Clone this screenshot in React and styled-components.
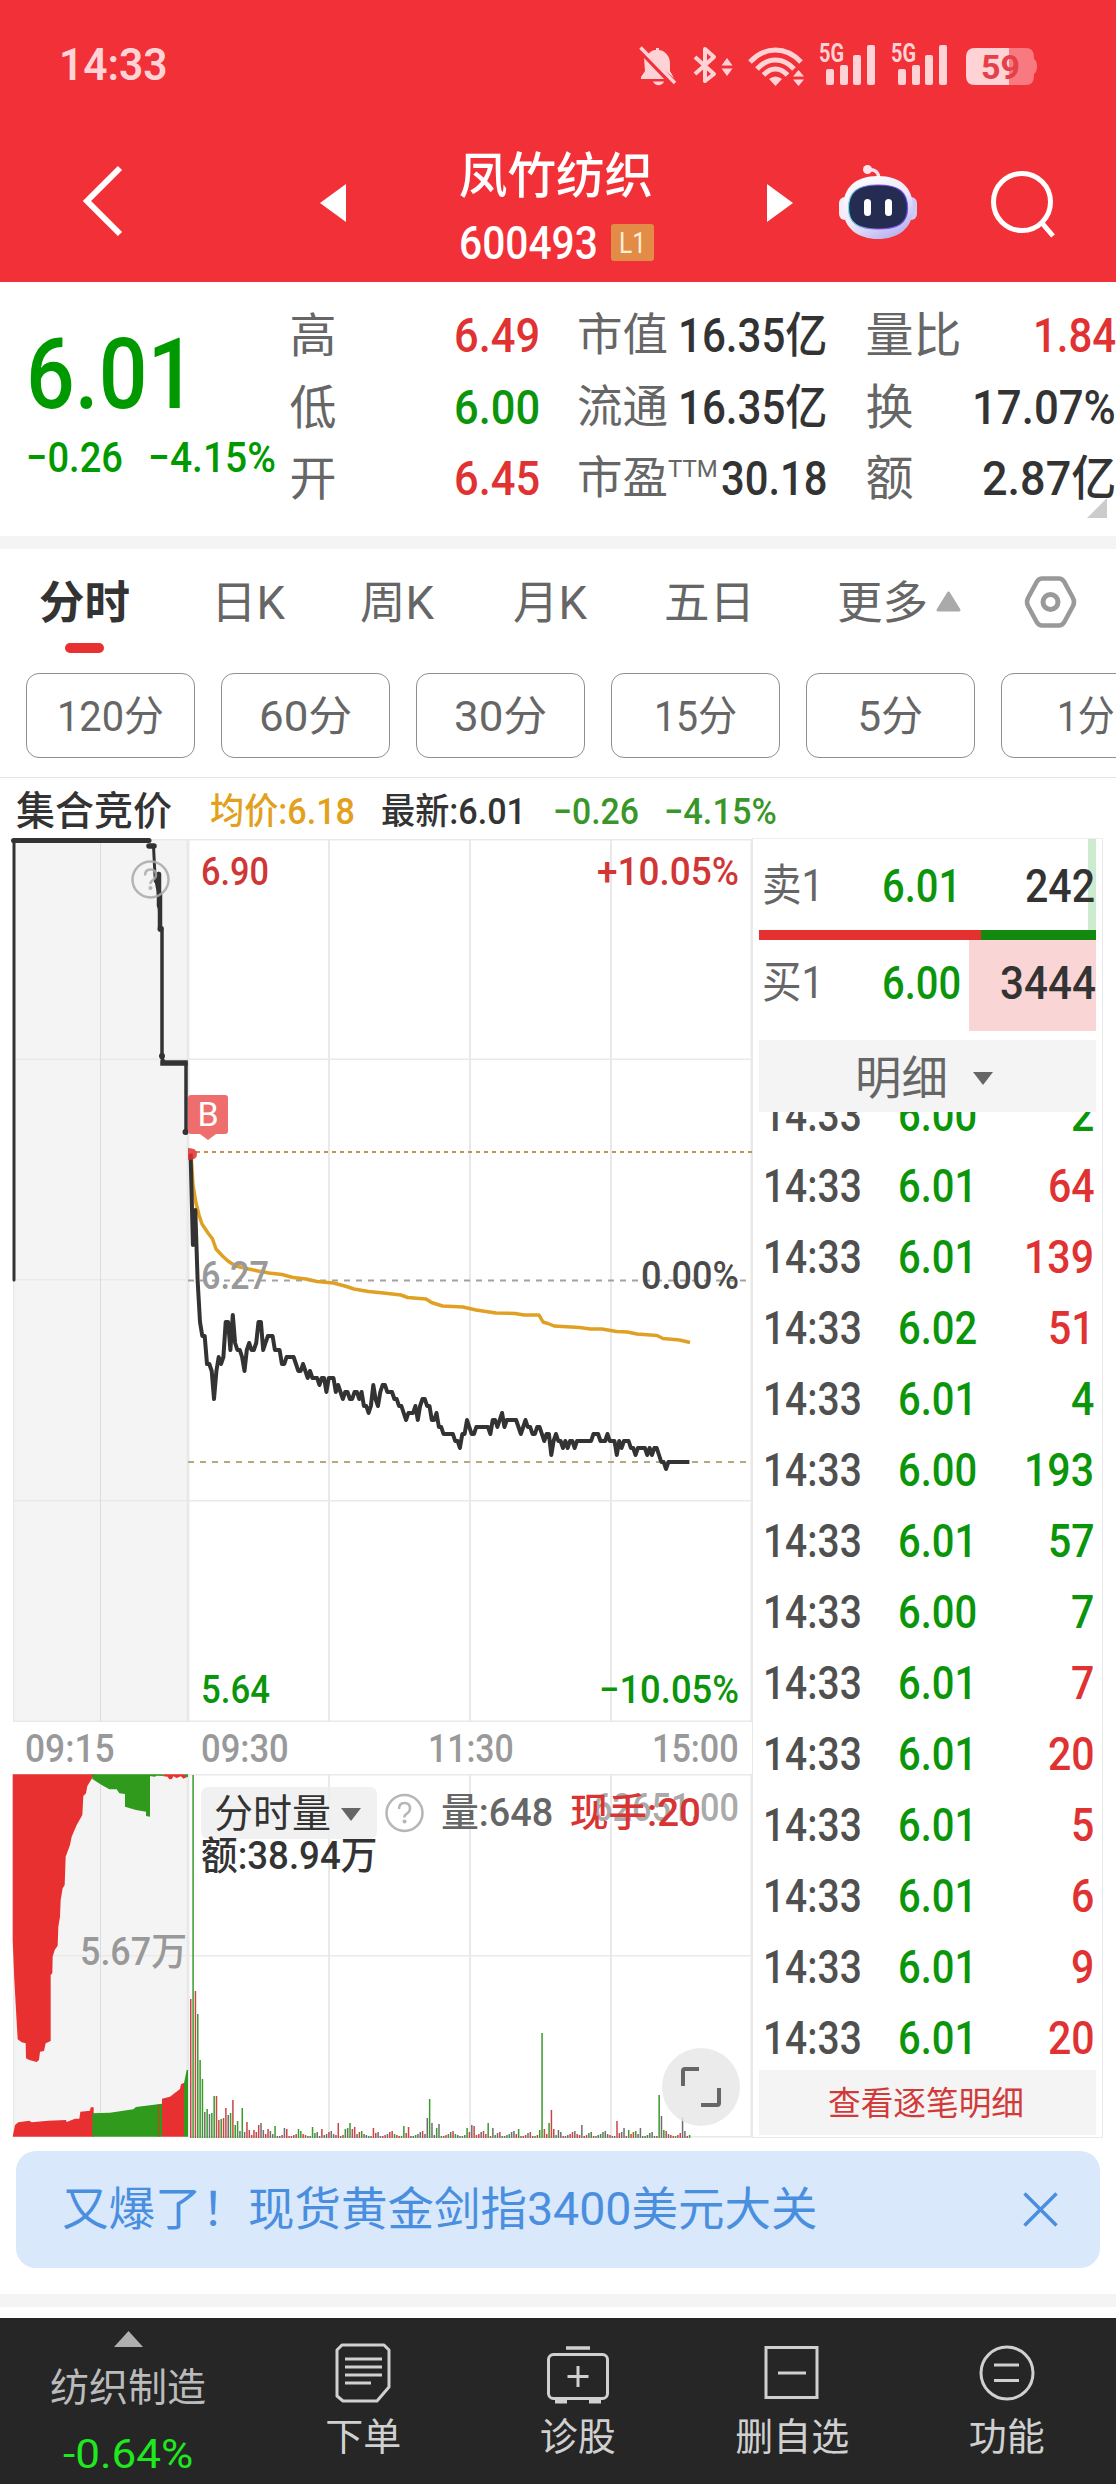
import React, { useLayoutEffect, useRef, useState } from "react";
import styled, { createGlobalStyle } from "styled-components";

const GlobalStyle = createGlobalStyle`
  * {
    box-sizing: border-box;
  }
  body {
    margin: 0;
    background: #fff;
    font-family: Roboto, "Noto Sans CJK SC", sans-serif;
    color: #333;
  }
  svg {
    display: block;
    flex: none;
    overflow: visible;
  }
`;

const RED = "#e03232";
const GREEN = "#0b950b";

const Page = styled.div`
  width: 1116px;
  height: 2484px;
  overflow: hidden;
  background: #fff;
  display: flex;
  flex-direction: column;
`;

/* text squeezed to a given width, the digits of the app font are narrow */
const FitBox = styled.span`
  display: inline-block;
  flex: none;
  white-space: nowrap;
  width: ${(p) => p.$w}px;
  font-size: ${(p) => p.$size}px;
  font-weight: ${(p) => p.$weight};
  color: ${(p) => p.$color || "inherit"};
  margin-left: ${(p) => p.$left || 0}px;
`;
const FitInner = styled.span`
  display: inline-block;
  transform-origin: left center;
`;

const Fit = ({ w, size, weight = 500, color, left, children }) => {
  const ref = useRef(null);
  const [k, setK] = useState(1);
  useLayoutEffect(() => {
    setK(w / ref.current.offsetWidth);
  }, [w, size, weight]);
  return (
    <FitBox $w={w} $size={size} $weight={weight} $color={color} $left={left}>
      <FitInner ref={ref} style={{ transform: `scaleX(${k})` }}>
        {children}
      </FitInner>
    </FitBox>
  );
};

/* ---------- header ---------- */

const Header = styled.header`
  height: 282px;
  flex: none;
  background: #f23037;
  color: #fff;
`;
const StatusBar = styled.div`
  height: 130px;
  padding: 0 80px 0 59px;
  display: flex;
  align-items: center;
  justify-content: space-between;
  color: #ffd3d6;
`;
const TitleBar = styled.div`
  height: 152px;
  display: flex;
  align-items: center;
  padding-left: 79px;
`;
const StockTitle = styled.div`
  width: 196px;
  margin: 0 112px 0 113px;
  padding-top: 2px;
  display: flex;
  flex-direction: column;
`;
const StockName = styled.div`
  font-size: 48.500px;
  line-height: 68px;
  font-weight: 500;
  white-space: nowrap;
  margin-top: 3px;
`;
const StockCode = styled.div`
  display: flex;
  align-items: center;
  height: 64px;
`;
const LevelBadge = styled.span`
  width: 43px;
  height: 37px;
  margin-left: 13px;
  border-radius: 3px;
  background: #e38c47;
  color: #fff0d8;
  display: flex;
  align-items: center;
  justify-content: center;
`;

const SignalGroup = ({ x }) => (
  <g transform={`translate(${x} 0)`}>
    <text x="0" y="19" fontSize="25" fontWeight="700" textLength="25" lengthAdjust="spacingAndGlyphs">
      5G
    </text>
    <rect x="7" y="26" width="8" height="16" rx="2" />
    <rect x="21" y="22" width="8" height="20" rx="2" />
    <rect x="34" y="12" width="8" height="30" rx="2" />
    <rect x="48" y="2" width="8" height="40" rx="2" />
  </g>
);

const StatusIcons = () => (
  <svg width="398" height="44" viewBox="0 0 398 44" fill="#ffd3d6">
    {/* muted bell */}
    <path d="M9 13 C12 8 15 7 18 7 V5 h3 v2 C28 8 32 14 32 20 V28 L36 35 Z" />
    <path d="M6 15 L26 36 H3 V34 L7 28 Z" />
    <path d="M15 38.500 h11 c-2 5 -9 5 -11 0z" />
    <path d="M2.500 4.500 L37 40" stroke="#ffd3d6" strokeWidth="3.500" />
    {/* bluetooth */}
    <g fill="none" stroke="#ffd3d6" strokeWidth="4">
      <path d="M57 14 L76 31 L67 38 V6 L76 14 L57 31" strokeLinejoin="round" />
    </g>
    <path d="M89 15 l5.500 7.500 h-11z M89 33 l5.500 -7.500 h-11z" />
    {/* wifi */}
    <g fill="none" stroke="#ffd3d6" strokeWidth="5">
      <path d="M112 19 C127 3 148 3 163 19" />
      <path d="M119 26 C130 14 145 14 156 26" />
      <path d="M125.500 32 C133 24 142 24 149.500 32" />
    </g>
    <path d="M131 36 q6.500 -5 13 0 l-6.500 7z" />
    <path d="M160.500 27 l5.500 6.500 h-11z M160.500 43 l5.500 -6.500 h-11z" />
    <SignalGroup x={181} />
    <SignalGroup x={253} />
    {/* battery */}
    <path d="M337 5 H371 V42 H337 Q328 42 328 33 V14 Q328 5 337 5z" />
    <path
      d="M371 5 H388 Q396 5 396 14 V16 Q399 18 399 23 Q399 29 396 31 V33 Q396 42 388 42 H371z"
      opacity="0.450"
    />
    <text x="343" y="36" fontSize="34" fontWeight="700" fill="#e5404a">
      59
    </text>
  </svg>
);

const Robot = () => (
  <svg width="78" height="76" viewBox="0 0 78 76">
    <defs>
      <linearGradient id="shell" x1="0" y1="0" x2="0.600" y2="1">
        <stop offset="0" stopColor="#fff" />
        <stop offset="0.600" stopColor="#eeeafb" />
        <stop offset="1" stopColor="#bcb8ee" />
      </linearGradient>
      <linearGradient id="rim" x1="0" y1="0" x2="1" y2="0">
        <stop offset="0" stopColor="#6fd9ea" />
        <stop offset="0.500" stopColor="#8a4ae8" />
        <stop offset="1" stopColor="#6a4af0" />
      </linearGradient>
    </defs>
    <path d="M28 6 Q40 4 40 16" fill="none" stroke="#fbe3ee" strokeWidth="3.500" />
    <circle cx="28.500" cy="5.500" r="4.500" fill="#fbe3ee" />
    <rect x="0" y="33" width="14" height="23" rx="6" fill="#f5ecf8" />
    <rect x="64" y="33" width="14" height="23" rx="6" fill="#cfc9f4" />
    <path
      d="M39 12 C62 12 74 24 74 44 C74 65 58 75 39 75 C20 75 4 65 4 44 C4 24 16 12 39 12z"
      fill="url(#shell)"
    />
    <path
      d="M39 21 C60 21 68.500 28 68.500 44 C68.500 60 58 65 39 65 C20 65 9.500 60 9.500 44 C9.500 28 18 21 39 21z"
      fill="#252c52"
      stroke="url(#rim)"
      strokeWidth="1.200"
    />
    <rect x="25" y="35" width="7" height="17" rx="3.500" fill="#fff" />
    <rect x="46" y="35" width="7" height="17" rx="3.500" fill="#fff" />
  </svg>
);

const RobotSlot = styled.div`
  margin: -8px 74px 0 46px;
`;
const BackSlot = styled.div`
  margin: -10px 195px 0 0;
`;
const ArrowSlot = styled.div`
  margin-top: -6px;
`;

const TopHeader = () => (
  <Header>
    <StatusBar>
      <Fit w={109} size={44} weight={600}>
        14:33
      </Fit>
      <StatusIcons />
    </StatusBar>
    <TitleBar>
      <BackSlot>
        <svg width="46" height="76" viewBox="0 0 46 76">
          <path d="M41 5 L8 38 L41 71" fill="none" stroke="#fff" strokeWidth="6" />
        </svg>
      </BackSlot>
      <ArrowSlot>
        <svg width="26" height="38" viewBox="0 0 26 38">
          <path d="M0 19 L26 0 V38z" fill="#fff" />
        </svg>
      </ArrowSlot>
      <StockTitle>
        <StockName>凤竹纺织</StockName>
        <StockCode>
          <Fit w={139} size={46}>
            600493
          </Fit>
          <LevelBadge>
            <Fit w={27} size={30} weight={400}>
              L1
            </Fit>
          </LevelBadge>
        </StockCode>
      </StockTitle>
      <ArrowSlot>
        <svg width="26" height="38" viewBox="0 0 26 38">
          <path d="M26 19 L0 0 V38z" fill="#fff" />
        </svg>
      </ArrowSlot>
      <RobotSlot>
        <Robot />
      </RobotSlot>
      <ArrowSlot>
        <svg width="68" height="68" viewBox="0 0 68 68" fill="none" stroke="#fff" strokeWidth="5">
          <circle cx="31" cy="33" r="28.500" />
          <path d="M51 54 L62 67" />
        </svg>
      </ArrowSlot>
    </TitleBar>
  </Header>
);

/* ---------- quote ---------- */

const QuotePanel = styled.section`
  height: 254px;
  flex: none;
  display: flex;
  position: relative;
`;
const PriceBlock = styled.div`
  width: 289.500px;
  flex: none;
  padding: 42px 0 0 26px;
  color: #009a00;
`;
const BigPrice = styled.div`
  height: 101px;
  line-height: 101px;
`;
const ChangeLine = styled.div`
  display: flex;
  height: 66px;
  line-height: 66px;
`;
const MetricColumn = styled.div`
  width: 250px;
  margin-right: ${(p) => p.$gap}px;
  padding-top: 18px;
  flex: none;
`;
const Metric = styled.div`
  height: 71.500px;
  display: flex;
  align-items: center;
  justify-content: space-between;
  line-height: 71px;
`;
const MetricLabel = styled.span`
  font-size: ${(p) => p.$size}px;
  color: #666;
  white-space: nowrap;
`;
const Ttm = styled.sup`
  font-size: 24px;
  line-height: 1;
  vertical-align: 17px;
`;
const Corner = styled.i`
  position: absolute;
  right: 9px;
  bottom: 18px;
  border-left: 20px solid transparent;
  border-bottom: 20px solid #ccc;
`;

const metricColumns = [
  {
    gap: 37.5,
    size: 47,
    rows: [
      ["高", "6.49", 86, RED],
      ["低", "6.00", 86, GREEN],
      ["开", "6.45", 86, RED],
    ],
  },
  {
    gap: 38.5,
    size: 45.5,
    rows: [
      ["市值", "16.35亿", 149, "#333"],
      ["流通", "16.35亿", 149, "#333"],
      ["市盈", "30.18", 106, "#333"],
    ],
  },
  {
    gap: 0,
    size: 48,
    rows: [
      ["量比", "1.84", 83, RED],
      ["换", "17.07%", 144, "#333"],
      ["额", "2.87亿", 134, "#333"],
    ],
  },
];

const Quote = () => (
  <QuotePanel>
    <PriceBlock>
      <BigPrice>
        <Fit w={170} size={99}>
          6.01
        </Fit>
      </BigPrice>
      <ChangeLine>
        <Fit w={97} size={42}>
          −0.26
        </Fit>
        <Fit w={128} size={42} left={25}>
          −4.15%
        </Fit>
      </ChangeLine>
    </PriceBlock>
    {metricColumns.map((col, i) => (
      <MetricColumn key={i} $gap={col.gap}>
        {col.rows.map(([label, value, w, color]) => (
          <Metric key={label}>
            <MetricLabel $size={col.size}>
              {label}
              {label === "市盈" && <Ttm>TTM</Ttm>}
            </MetricLabel>
            <Fit w={w} size={48} color={color}>
              {value}
            </Fit>
          </Metric>
        ))}
      </MetricColumn>
    ))}
    <Corner />
  </QuotePanel>
);

const Stripe = styled.div`
  height: 13px;
  flex: none;
  background: #f4f4f4;
`;

/* ---------- tabs ---------- */

const Tabs = styled.nav`
  height: 124px;
  flex: none;
  padding-left: 39px;
  display: flex;
  align-items: flex-start;
`;
const Tab = styled.div`
  width: ${(p) => p.$w}px;
  flex: none;
  font-size: 45.500px;
  line-height: 109px;
  white-space: nowrap;
  color: ${(p) => (p.$active ? "#333" : "#666")};
  font-weight: ${(p) => (p.$active ? 700 : 400)};
  position: relative;
  ${(p) =>
    p.$active &&
    `&::after {
      content: "";
      position: absolute;
      left: 26px;
      top: 94px;
      width: 39px;
      height: 10px;
      border-radius: 5px;
      background: #e83030;
    }`}
`;
const TabIcon = styled.div`
  margin: ${(p) => p.$m};
`;
const Pills = styled.div`
  height: 105px;
  flex: none;
  padding-left: 26px;
  display: flex;
  gap: 26px;
  border-bottom: 1px solid #e4e4e4;
`;
const Pill = styled.div`
  width: 169px;
  height: 85px;
  flex: none;
  border: 1px solid #8f8f8f;
  border-radius: 13px;
  padding-top: 3px;
  display: flex;
  align-items: center;
  justify-content: center;
  color: #666;
  line-height: 80px;
`;

const TabArea = () => (
  <>
    <Tabs>
      <Tab $active $w={172}>
        分时
      </Tab>
      <Tab $w={149}>日K</Tab>
      <Tab $w={153}>周K</Tab>
      <Tab $w={151}>月K</Tab>
      <Tab $w={173}>五日</Tab>
      <Tab $w={98}>更多</Tab>
      <TabIcon $m="42px 63px 0 1px">
        <svg width="25" height="21" viewBox="0 0 25 21">
          <path d="M12.500 2 L23 19 H2z" fill="#aaa" stroke="#aaa" strokeWidth="3" strokeLinejoin="round" />
        </svg>
      </TabIcon>
      <TabIcon $m="26px 0 0 0">
        <svg width="53" height="54" viewBox="0 0 53 54" fill="none" stroke="#999" strokeWidth="5">
          <path
            d="M18 3.500 H35 Q38 3.500 40 6.500 L49 23 Q51 27 49 31 L40 47.500 Q38 50.500 35 50.500 H18 Q15 50.500 13 47.500 L4 31 Q2 27 4 23 L13 6.500 Q15 3.500 18 3.500z"
            strokeWidth="4.500"
          />
          <circle cx="26.500" cy="27" r="7.500" />
        </svg>
      </TabIcon>
    </Tabs>
    <Pills>
      {[
        ["120分", 107],
        ["60分", 93],
        ["30分", 93],
        ["15分", 83],
        ["5分", 66],
        ["1分", 58],
      ].map(([label, w]) => (
        <Pill key={label}>
          <Fit w={w} size={42} weight={400}>
            {label}
          </Fit>
        </Pill>
      ))}
    </Pills>
  </>
);

/* ---------- chart legend ---------- */

const Legend = styled.div`
  height: 60px;
  flex: none;
  padding-left: 16px;
  display: flex;
  line-height: 68px;
`;

const ChartLegend = () => (
  <Legend>
    <Fit w={156} size={39.5}>
      集合竞价
    </Fit>
    <Fit w={145} size={36.5} color="#e2a01c" left={38}>
      均价:6.18
    </Fit>
    <Fit w={145} size={36.5} left={26}>
      最新:6.01
    </Fit>
    <Fit w={86} size={36.5} color="#3a9628" left={27}>
      −0.26
    </Fit>
    <Fit w={113} size={36.5} color="#3a9628" left={25}>
      −4.15%
    </Fit>
  </Legend>
);

/* ---------- charts ---------- */

// price of every minute, in cents
const prices = [
  645, 632, 637, 627, 621, 619, 619, 615, 615, 614, 610, 614, 616, 615, 616, 621, 621, 617, 622, 618,
  617, 617, 616, 614, 617, 618, 617, 617, 618, 621, 621, 617, 618, 619, 619, 619, 617, 617, 617, 615,
  615, 616, 616, 616, 616, 615, 614, 614, 615, 614, 613, 614, 613, 613, 613, 612, 613, 613, 611, 613,
  613, 613, 611, 612, 611, 610, 611, 611, 610, 610, 611, 611, 610, 611, 609, 609, 608, 609, 612, 610,
  609, 611, 612, 612, 611, 611, 611, 610, 610, 609, 609, 608, 607, 608, 608, 608, 609, 607, 609, 610,
  610, 609, 609, 607, 607, 608, 606, 606, 605, 605, 605, 605, 605, 604, 604, 603, 605, 605, 607, 606,
  605, 605, 606, 606, 606, 606, 606, 606, 605, 607, 607, 606, 607, 608, 606, 607, 607, 607, 607, 607,
  606, 605, 606, 607, 606, 606, 605, 605, 606, 606, 605, 604, 605, 605, 602, 604, 605, 604, 604, 603,
  604, 603, 604, 604, 603, 604, 604, 604, 604, 604, 604, 604, 605, 605, 605, 604, 604, 604, 605, 604,
  604, 604, 602, 604, 603, 604, 604, 604, 603, 603, 602, 603, 603, 603, 603, 602, 603, 602, 603, 603,
  602, 601, 601, 600, 601, 601, 601, 601, 601, 601, 601, 601, 601, 601,
];
const minuteX = (m) => 190.6 + m * 2.342;
const priceY = (c) => 442 + (627 - c) * 7;
const pricePoints = prices.map((c, m) => `${minuteX(m).toFixed(1)},${priceY(c)}`).join(" ");

const averagePoints =
  "191,315 193,347 196,365 199,377 202,386 208,395 212.5,401 216,411 222.5,418 228,423 235.5,428 248.5,431 258,433 269,435 282,436.5 293,439.5 306,441 317,443.5 333.5,445 346.5,448.5 354,451 368.5,453.5 383.5,455 401,457 407.5,459.5 426,461 431.5,464.5 442.5,468 463,469 476,472 496,475 515,475.5 524,477 539,477 543,484 548,485.5 554,488 579.5,489.5 590.5,491 602,491 616.5,493.5 627.5,494 637,496 657,497.5 663,500.5 679.5,502 690,504.5";

const ChartText = ({ x, y, w, end, color, size = 38.5, children }) => (
  <text
    x={x}
    y={y}
    fill={color}
    fontSize={size}
    fontWeight="500"
    textAnchor={end ? "end" : "start"}
    textLength={w}
    lengthAdjust="spacingAndGlyphs"
  >
    {children}
  </text>
);

const HelpIcon = ({ cx, cy }) => (
  <g opacity="0.850">
    <circle cx={cx} cy={cy} r="18" fill="none" stroke="#aaa" strokeWidth="2.500" />
    <path
      d={`M${cx - 5.5} ${cy - 4} q0 -6 5.500 -6 t5.500 5.500 q0 3 -3 5 t-2.500 4`}
      fill="none"
      stroke="#aaa"
      strokeWidth="2.500"
    />
    <circle cx={cx} cy={cy + 8.5} r="2" fill="#aaa" />
  </g>
);

const PriceChart = () => (
  <svg width="752" height="885" viewBox="0 0 752 885">
    <rect x="13" y="1" width="174" height="883" fill="#f4f4f4" />
    <g fill="#e9e9e9">
      <rect x="13" y="1" width="739" height="1.500" />
      <rect x="13" y="220.500" width="739" height="1.500" />
      <rect x="13" y="441" width="176" height="1.500" />
      <rect x="13" y="662" width="739" height="1.500" />
      <rect x="13" y="882.500" width="739" height="1.500" />
      <rect x="13" y="1" width="1.500" height="883" />
      <rect x="100" y="1" width="1" height="883" fill="#dcdcdc" />
      <rect x="186.500" y="1" width="3" height="883" />
      <rect x="328" y="1" width="2" height="883" />
      <rect x="469" y="1" width="2" height="883" />
      <rect x="610" y="1" width="2" height="883" />
      <rect x="750.500" y="1" width="1.500" height="883" />
    </g>
    <line x1="196" x2="752" y1="314" y2="314" stroke="#c39358" strokeWidth="2" strokeDasharray="4 4" />
    <line x1="188" x2="752" y1="442.500" y2="442.500" stroke="#a2a2a2" strokeWidth="2" strokeDasharray="6 6" />
    <line x1="188" x2="752" y1="624" y2="624" stroke="#b9a87f" strokeWidth="2" strokeDasharray="6 6" />

    {/* call auction */}
    <g fill="none" stroke="#333" strokeLinecap="round" strokeLinejoin="round">
      <path d="M14 442 V4" strokeWidth="3" />
      <path d="M13.500 2.500 H149" strokeWidth="5" />
      <path d="M149 8 H154" strokeWidth="5.500" />
      <path d="M153.500 8 L155 38 L158 53 L160.500 88" strokeWidth="3" />
      <path d="M158.500 36 L156 43 M159 36 V68 M160 56 V90" strokeWidth="4.500" />
      <path d="M162 90 V220 L164 225" strokeWidth="3.500" />
      <path d="M163 225 H185" strokeWidth="5.500" strokeLinecap="square" />
      <path d="M186 225 V295" strokeWidth="3.500" />
    </g>
    <circle cx="160.500" cy="91" r="3" fill="#333" />
    <circle cx="162" cy="218" r="3" fill="#333" />
    <circle cx="185.500" cy="294" r="3" fill="#333" />
    <HelpIcon cx={150.5} cy={41.5} />

    <polyline points={averagePoints} fill="none" stroke="#dfa024" strokeWidth="3.500" strokeLinejoin="round" />
    <polyline points={pricePoints} fill="none" stroke="#333" strokeWidth="4" strokeLinejoin="round" />
    <path d="M188 310 q9 0 9 6 q0 6 -9 6z" fill="#e02f2f" opacity="0.850" />

    <path d="M191 257 H225 Q228 257 228 260 V293 Q228 296 225 296 H216 L208 302 L200 296 H191 Q188 296 188 293 V260 Q188 257 191 257z" fill="#ee6e6e" />
    <text x="208" y="287.500" fontSize="34" fill="#fff" textAnchor="middle">
      B
    </text>

    <ChartText x={201} y={46.5} w={68} color="#d03636">
      6.90
    </ChartText>
    <ChartText x={739} y={46.5} w={142} end color="#d03636">
      +10.05%
    </ChartText>
    <ChartText x={201} y={451} w={68} color="#999">
      6.27
    </ChartText>
    <ChartText x={739} y={451} w={98} end color="#4a4a4a">
      0.00%
    </ChartText>
    <ChartText x={201} y={865} w={69} color={GREEN}>
      5.64
    </ChartText>
    <ChartText x={739} y={865} w={140} end color={GREEN}>
      −10.05%
    </ChartText>
  </svg>
);

const TimeAxis = styled.div`
  height: 51px;
  display: flex;
  padding-left: 25px;
  line-height: 52px;
`;

// [minute, height, colour] of the bars that stand out, the rest is small
const R = "#c84646";
const G = "#3a9a2c";
const K = "#6e6e6e";
const tallBars = [
  [0, 139, R], [1, 363, G], [2, 147, R], [3, 124, G], [4, 78, G], [5, 59, G], [6, 26, K], [7, 29, G],
  [8, 24, K], [9, 25, G], [10, 42, G], [11, 42, R], [12, 18, R], [13, 19, G], [14, 20, R], [15, 30, R],
  [16, 23, K], [17, 25, G], [18, 38, R], [19, 13, G], [20, 17, G], [21, 7, K], [22, 30, G], [23, 6, K],
  [24, 16, R], [25, 8, R], [27, 8, R], [29, 13, R], [30, 15, K], [31, 8, K], [33, 9, R], [36, 12, G],
  [40, 10, K], [41, 9, R], [46, 9, G], [52, 11, G], [56, 9, R], [63, 15, R], [66, 9, G], [67, 10, K],
  [68, 15, G], [69, 9, R], [70, 11, R], [78, 10, R], [91, 12, G], [93, 11, R], [101, 20, K],
  [102, 39, G], [103, 15, K], [105, 10, G], [106, 14, K], [118, 10, G], [120, 13, K], [121, 12, R],
  [127, 15, G], [129, 10, K], [140, 9, G], [149, 8, G], [150, 105, G], [151, 9, R], [153, 15, G],
  [154, 28, R], [155, 9, R], [157, 8, K], [167, 13, K], [182, 17, R], [185, 10, K], [187, 8, G],
  [192, 10, K], [200, 43, G], [201, 22, K], [202, 8, G], [210, 21, K], [211, 7, K],
];
const smallBars = [3, 6, 2, 4, 7, 3, 2, 5, 2, 3, 6, 4, 2];
const tallByMinute = Object.fromEntries(tallBars.map((b) => [b[0], b]));
const volumeBars = prices.map(
  (_, m) => tallByMinute[m] || [m, smallBars[(m * 7) % 13], [K, R, G, K, R][(m * 3 + (m >> 2)) % 5]]
);

const VolumeBox = styled.div`
  position: relative;
  height: 364px;
`;

const VolumeChart = () => (
  <svg width="752" height="364" viewBox="0 0 752 364">
    <rect x="13" y="0.500" width="174" height="362" fill="#f4f4f4" />
    <g fill="#e9e9e9">
      <rect x="13" y="0" width="739" height="1.500" />
      <rect x="13" y="181" width="739" height="1.500" />
      <rect x="188" y="362" width="564" height="1.500" />
      <rect x="13" y="0" width="1.500" height="363" />
      <rect x="100" y="0" width="1" height="363" fill="#dcdcdc" />
      <rect x="186.500" y="0" width="3" height="363" />
      <rect x="328" y="0" width="2" height="363" />
      <rect x="469" y="0" width="2" height="363" />
      <rect x="610" y="0" width="2" height="363" />
      <rect x="750.500" y="0" width="1.500" height="363" />
    </g>
    {/* matched and unmatched auction volume */}
    <g transform="translate(0 -114) scale(0.33333)">
      <g fill="#e83030">
        <path d="M38 343 H282 L275 357 262 378 258 400 250 408 247 465 230 495 215 530 210 555 197 590 194 675 188 685 182 720 180 770 175 800 173 857 164 870 158 890 157 940 152 945 V1143 L137 1150 132 1173 120 1175 117 1200 110 1206 88 1200 78 1195 77 1150 65 1147 53 1138 48 1050 43 960 38 840z" />
        <path d="M490 343 H553 L560 352 550 356 543 349 530 354 520 349 516 357 508 358 503 350 490 349z" />
        <path d="M38 1430 L45 1395 55 1387 88 1382 95 1387 145 1382 198 1380 200 1386 225 1376 238 1376 241 1355 270 1352 272 1342 281 1342 V1430z" />
        <path d="M486 1430 V1316 L510 1310 540 1287 543 1273 553 1268 V1430z" />
      </g>
      <g fill="#2f9a1c">
        <path d="M277 343 H450 V470 L438 468 V455 L408 450 375 440 V402 L358 400 350 388 328 388 305 375 277 357z" />
        <path d="M448 343 H490 V348 L470 347 465 350 448 348z M553 343 H564 V351 H556z" />
        <path d="M277 1430 V1360 L330 1358 400 1348 408 1341 486 1331 V1430z" />
        <path d="M552 1430 V1270 L560 1230 H564 V1430z" />
      </g>
      <path d="M476 1333 V1430" stroke="#a05a1c" strokeWidth="5" />
    </g>
    {volumeBars.map(([m, h, color]) => (
      <rect key={m} x={minuteX(m) - 0.6} y={364 - h} width="1.500" height={h} fill={color} />
    ))}
    <ChartText x={80} y={190.5} w={107} color="#999">
      5.67万
    </ChartText>
    <ChartText x={739} y={46.5} w={146} end color="#aaa">
      62651.00
    </ChartText>
    <HelpIcon cx={404.5} cy={39} />
  </svg>
);

const VolumeLegend = styled.div`
  position: absolute;
  left: 201px;
  top: 13px;
  height: 52px;
  display: flex;
  align-items: center;
  line-height: 54px;
`;
const VolumeChip = styled.div`
  width: 176px;
  height: 52px;
  padding: 2px 0 0 13px;
  border-radius: 7px;
  background: rgba(238, 238, 238, 0.85);
  display: flex;
  align-items: center;
`;
const ChipArrow = styled.i`
  margin-left: ${(p) => p.$left}px;
  border: 10px solid transparent;
  border-top: 13px solid #666;
  border-bottom: 0;
`;
const AmountLine = styled.div`
  position: absolute;
  left: 201px;
  top: 58px;
  line-height: 47px;
`;
const Fullscreen = styled.button`
  position: absolute;
  left: 662px;
  top: 274px;
  width: 78px;
  height: 78px;
  padding: 0;
  border: 0;
  border-radius: 50%;
  background: rgba(232, 232, 232, 0.85);
  display: flex;
  align-items: center;
  justify-content: center;
`;

const ChartColumn = styled.div`
  width: 752px;
  flex: none;
`;

const Charts = () => (
  <ChartColumn>
    <PriceChart />
    <TimeAxis>
      <Fit w={90} size={38.5} color="#999">
        09:15
      </Fit>
      <Fit w={88} size={38.5} color="#999" left={86}>
        09:30
      </Fit>
      <Fit w={86} size={38.5} color="#999" left={139}>
        11:30
      </Fit>
      <Fit w={87} size={38.5} color="#999" left={138}>
        15:00
      </Fit>
    </TimeAxis>
    <VolumeBox>
      <VolumeChart />
      <VolumeLegend>
        <VolumeChip>
          <Fit w={117} size={39} weight={400}>
            分时量
          </Fit>
          <ChipArrow $left={10} />
        </VolumeChip>
        <Fit w={112} size={38.5} color="#666" left={64}>
          量:648
        </Fit>
        <Fit w={131} size={38.5} color="#d83434" left={17}>
          现手:20
        </Fit>
      </VolumeLegend>
      <AmountLine>
        <Fit w={176} size={38.5}>
          额:38.94万
        </Fit>
      </AmountLine>
      <Fullscreen>
        <svg width="42" height="42" viewBox="0 0 42 42" fill="none" stroke="#666" strokeWidth="4">
          <path d="M3 20 V5 Q3 3 5 3 H19" />
          <path d="M39 22 V37 Q39 39 37 39 H21" />
        </svg>
      </Fullscreen>
    </VolumeBox>
  </ChartColumn>
);

/* ---------- order book ---------- */

const MarketArea = styled.section`
  height: 1300px;
  flex: none;
  display: flex;
`;
const Book = styled.aside`
  width: 351px;
  padding: 0 6px;
  border: 1px solid #e9e9e9;
  border-top-color: #eee;
  display: flex;
  flex-direction: column;
`;
const Level = styled.div`
  height: 91px;
  flex: none;
  padding: ${(p) => p.$pad};
  display: flex;
  align-items: center;
  line-height: 84px;
  background: linear-gradient(${(p) => p.$tint}, ${(p) => p.$tint}) right / ${(p) => p.$depth}px 100% no-repeat;
`;
const LevelName = styled.span`
  width: 123px;
  padding-left: 3px;
  display: flex;
`;
const Push = styled.span`
  margin-left: auto;
  display: flex;
  padding-right: ${(p) => p.$pad || 0}px;
`;
const Balance = styled.div`
  height: 10px;
  flex: none;
  background: linear-gradient(90deg, #e53030 222px, #13890f 222px);
`;
const DetailSelect = styled.div`
  height: 72px;
  flex: none;
  margin-top: 9px;
  padding: 4px 0 0 96px;
  background: #f4f4f4;
  color: #666;
  display: flex;
  align-items: center;
  line-height: 74px;
`;
const TradeList = styled.div`
  height: 958px;
  flex: none;
  overflow: hidden;
  display: flex;
  flex-direction: column;
  justify-content: flex-end;
`;
const Trade = styled.div`
  height: 71px;
  flex: none;
  padding: 6px 2px 0 4px;
  display: flex;
  align-items: center;
  line-height: 64px;
  color: #505050;
`;
const DetailLink = styled.div`
  height: 65px;
  flex: none;
  background: #f4f4f4;
  color: #d23a3a;
  text-align: center;
  line-height: 67px;
`;

const trades = [
  ["6.00", "2", 0],
  ["6.01", "64", 1],
  ["6.01", "139", 1],
  ["6.02", "51", 1],
  ["6.01", "4", 0],
  ["6.00", "193", 0],
  ["6.01", "57", 0],
  ["6.00", "7", 0],
  ["6.01", "7", 1],
  ["6.01", "20", 1],
  ["6.01", "5", 1],
  ["6.01", "6", 1],
  ["6.01", "9", 1],
  ["6.01", "20", 1],
];

const OrderBook = () => (
  <Book>
    <Level $pad="3px 0 0" $tint="#cdebcf" $depth={8}>
      <LevelName>
        <Fit w={62} size={44} weight={400} color="#666">
          卖1
        </Fit>
      </LevelName>
      <Fit w={79} size={47} color={GREEN}>
        6.01
      </Fit>
      <Push $pad={1}>
        <Fit w={70} size={47}>
          242
        </Fit>
      </Push>
    </Level>
    <Balance />
    <Level $pad="0 0 5px" $tint="#f9d5d5" $depth={127}>
      <LevelName>
        <Fit w={62} size={44} weight={400} color="#666">
          买1
        </Fit>
      </LevelName>
      <Fit w={79} size={47} color={GREEN}>
        6.00
      </Fit>
      <Push>
        <Fit w={96} size={47}>
          3444
        </Fit>
      </Push>
    </Level>
    <DetailSelect>
      <Fit w={93} size={46} weight={400}>
        明细
      </Fit>
      <ChipArrow $left={25} />
    </DetailSelect>
    <TradeList>
      {trades.map(([price, volume, up], i) => (
        <Trade key={i}>
          <Fit w={99} size={46}>
            14:33
          </Fit>
          <Fit w={79} size={46} color={GREEN} left={36}>
            {price}
          </Fit>
          <Push>
            <Fit w={volume.length * 23.2} size={46} color={up ? RED : GREEN}>
              {volume}
            </Fit>
          </Push>
        </Trade>
      ))}
    </TradeList>
    <DetailLink>
      <Fit w={196} size={33} weight={400} left={-4}>
        查看逐笔明细
      </Fit>
    </DetailLink>
  </Book>
);

/* ---------- news banner and bottom bar ---------- */

const Banner = styled.div`
  height: 117px;
  flex: none;
  margin: 13px 16px 26px;
  padding: 0 41px 0 46px;
  border-radius: 20px;
  background: #d9e8fb;
  color: #4a8fdf;
  display: flex;
  align-items: center;
  justify-content: space-between;
  line-height: 119px;
`;
const BottomBar = styled.footer`
  height: 166px;
  flex: none;
  margin-top: 11px;
  background: #262626;
  color: #d0d0d0;
  display: flex;
`;
const Industry = styled.div`
  width: 256px;
  flex: none;
  padding-top: 13px;
  color: #bbb;
  display: flex;
  flex-direction: column;
  align-items: center;
`;
const IndustryName = styled.div`
  flex: none;
  font-size: 39px;
  line-height: 82px;
  height: 77px;
`;
const IndustryChange = styled.div`
  flex: none;
  display: flex;
  line-height: 60px;
`;
const Action = styled.div`
  width: 214.500px;
  flex: none;
  padding-top: 22px;
  display: flex;
  flex-direction: column;
  align-items: center;
`;
const ActionLabel = styled.div`
  font-size: 38px;
  line-height: 62px;
`;

const IconFrame = ({ children }) => (
  <svg width="66" height="66" viewBox="0 0 66 66" fill="none" stroke="#d0d0d0" strokeWidth="3">
    {children}
  </svg>
);

const actions = [
  [
    "下单",
    <IconFrame key="order">
      <path d="M12 5 H54 L59 10 V47 L47 61 H13 L7 56 V10z" strokeLinejoin="round" />
      <path d="M15 19 H52 M15 27 H52 M15 35 H52 M15 43 H41" />
    </IconFrame>,
  ],
  [
    "诊股",
    <IconFrame key="check">
      <path d="M21 8 H45" strokeWidth="3.500" />
      <rect x="3.500" y="14.500" width="59" height="44" rx="5" />
      <path d="M10 61.500 H22 M44 61.500 H56" strokeWidth="4" />
      <path d="M33 26 V47 M22.500 36.500 H43.500" />
    </IconFrame>,
  ],
  [
    "删自选",
    <IconFrame key="remove">
      <rect x="7" y="7.500" width="51" height="50" />
      <path d="M19 33 H47" />
    </IconFrame>,
  ],
  [
    "功能",
    <IconFrame key="more">
      <circle cx="33" cy="33" r="26" />
      <path d="M20 25 H45 M20 40.500 H45" />
    </IconFrame>,
  ],
];

export default function App() {
  return (
    <Page>
      <GlobalStyle />
      <TopHeader />
      <Quote />
      <Stripe />
      <TabArea />
      <ChartLegend />
      <MarketArea>
        <Charts />
        <OrderBook />
      </MarketArea>
      <Banner>
        <Fit w={755} size={46} weight={400}>
          又爆了！现货黄金剑指3400美元大关
        </Fit>
        <svg width="37" height="37" viewBox="0 0 37 37" stroke="#4a8fdf" strokeWidth="3.500">
          <path d="M2.500 2.500 L34.500 34.500 M34.500 2.500 L2.500 34.500" />
        </svg>
      </Banner>
      <Stripe />
      <BottomBar>
        <Industry>
          <svg width="29" height="16" viewBox="0 0 29 16">
            <path d="M14.500 0 L29 16 H0z" fill="#b0b0b0" />
          </svg>
          <IndustryName>纺织制造</IndustryName>
          <IndustryChange>
            <Fit w={130} size={41} weight={400} color="#1fe81f">
              -0.64%
            </Fit>
          </IndustryChange>
        </Industry>
        {actions.map(([label, icon]) => (
          <Action key={label}>
            {icon}
            <ActionLabel>{label}</ActionLabel>
          </Action>
        ))}
      </BottomBar>
    </Page>
  );
}
